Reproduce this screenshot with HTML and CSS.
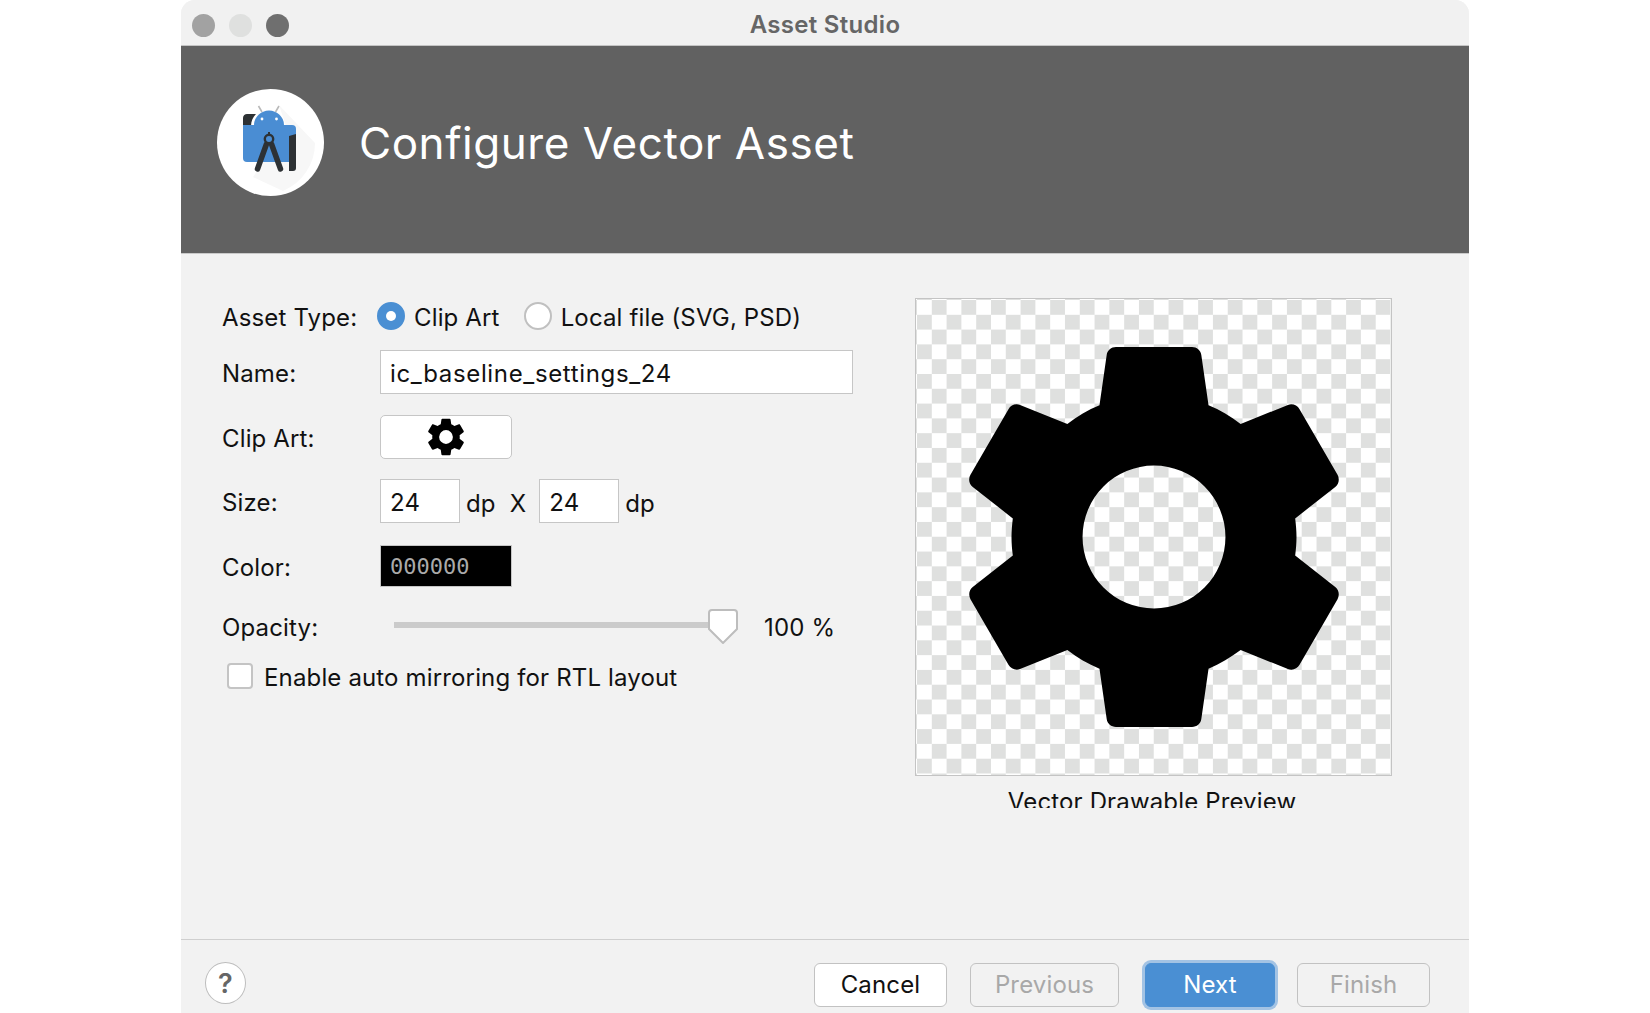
FILE: index.html
```html
<!DOCTYPE html>
<html>
    <head>
        <title>Asset Studio</title>
        <meta name='viewport' content='width=device-width, initial-scale=1.0'>
        <link rel="stylesheet" href="styles.css">
    </head>
    <body>
        <svg class="defs" width="0" height="0">
            <symbol id="gear" viewBox="0 0 24 24">
                <path fill-rule="evenodd" d="M19.43 12.98c.04-.32.07-.64.07-.98s-.03-.66-.07-.98l2.11-1.65c.19-.15.24-.42.12-.64l-2-3.46c-.12-.22-.39-.3-.61-.22l-2.49 1c-.52-.4-1.08-.73-1.69-.98l-.38-2.65C14.46 2.18 14.25 2 14 2h-4c-.25 0-.46.18-.49.42l-.38 2.65c-.61.25-1.17.59-1.69.98l-2.49-1c-.23-.09-.49 0-.61.22l-2 3.46c-.13.22-.07.49.12.64l2.11 1.65c-.04.32-.07.65-.07.98s.03.66.07.98l-2.11 1.65c-.19.15-.24.42-.12.64l2 3.46c.12.22.39.3.61.22l2.49-1c.52.4 1.08.73 1.69.98l.38 2.65c.03.24.24.42.49.42h4c.25 0 .46-.18.49-.42l.38-2.65c.61-.25 1.17-.59 1.69-.98l2.49 1c.23.09.49 0 .61-.22l2-3.46c.12-.22.07-.49-.12-.64l-2.11-1.65zM12 15.76a3.76 3.76 0 1 1 0-7.52 3.76 3.76 0 0 1 0 7.52z"/>
            </symbol>
        </svg>
        <div class="window">
            <div class="titlebar">
                <div class="lights">
                    <span class="light light-close"></span>
                    <span class="light light-min"></span>
                    <span class="light light-max"></span>
                </div>
                <span class="window-title">Asset Studio</span>
            </div>
            <div class="banner">
                <svg class="logo" viewBox="0 0 107 107" width="107" height="107">
                    <circle cx="53.5" cy="53.5" r="53.5" fill="#fff"/>
                    <path d="M62 16 L98 54 A52 52 0 0 1 66 102 L36 88 L70 40z" fill="#f7f7f7"/>
                    <path d="M41.500 17 L45 23 M62 17 L58.500 23" stroke="#b9b9b9" stroke-width="1.6"/>
                    <path d="M37 36 C37 28 44 21.500 52 21.500 C60 21.500 67 28 67 36z" fill="#4a8dd3"/>
                    <circle cx="45" cy="30" r="1.4" fill="#fff"/>
                    <circle cx="59.5" cy="30" r="1.4" fill="#fff"/>
                    <path d="M26 37 V29 C26 26.500 28 25 30 25 H39 C36 28 34 32 34 37z" fill="#2d3134"/>
                    <path d="M26 36 H75 Q79 36 79 40 V70 Q79 73 76 73 H30 Q26 73 26 69z" fill="#4a8dd3"/>
                    <path d="M72 47 L79 45 V79 Q79 82 76 82 H72z" fill="#2d3134"/>
                    <path d="M49.500 55 L40.500 80 M54.500 55 L63.500 80" stroke="#2d3134" stroke-width="5.500" stroke-linecap="round"/>
                    <circle cx="52" cy="50" r="4.200" fill="#4a8dd3" stroke="#2d3134" stroke-width="2.400"/>
                    <rect x="51" y="43" width="2" height="3" fill="#2d3134"/>
                </svg>
                <h1 class="banner-title">Configure Vector Asset</h1>
            </div>
            <div class="content">
                <form class="form">
                    <div class="row row-type">
                        <label class="row-label row-label-type">Asset Type:</label>
                        <span class="radio radio-on"></span>
                        <span class="radio-text">Clip Art</span>
                        <span class="radio"></span>
                        <span class="radio-text">Local file (SVG, PSD)</span>
                    </div>
                    <div class="row row-name">
                        <label class="row-label">Name:</label>
                        <div class="field field-name">ic_baseline_settings_24</div>
                    </div>
                    <div class="row row-clip">
                        <label class="row-label">Clip Art:</label>
                        <div class="clip-button"><svg width="44" height="44"><use href="#gear"/></svg></div>
                    </div>
                    <div class="row row-size">
                        <label class="row-label">Size:</label>
                        <div class="field field-size">24</div>
                        <span class="unit">dp</span>
                        <span class="times">X</span>
                        <div class="field field-size">24</div>
                        <span class="unit">dp</span>
                    </div>
                    <div class="row row-color">
                        <label class="row-label">Color:</label>
                        <div class="color-swatch">000000</div>
                    </div>
                    <div class="row row-opacity">
                        <label class="row-label">Opacity:</label>
                        <div class="slider-track"></div>
                        <svg class="slider-thumb" width="30" height="35" viewBox="0 0 30 35">
                            <path d="M4 1 H26 Q29 1 29 4 V20 L15 34 L1 20 V4 Q1 1 4 1z" fill="#fff" stroke="#bdbdbd" stroke-width="2"/>
                        </svg>
                        <span class="slider-value">100 %</span>
                    </div>
                    <div class="row row-mirror">
                        <span class="checkbox"></span>
                        <span class="mirror-text">Enable auto mirroring for RTL layout</span>
                    </div>
                </form>
                <div class="preview">
                    <div class="preview-box">
                        <svg width="456" height="456"><use href="#gear"/></svg>
                    </div>
                    <div class="preview-caption">Vector Drawable Preview</div>
                </div>
            </div>
            <div class="footer">
                <div class="help">?</div>
                <div class="btn btn-cancel">Cancel</div>
                <div class="btn btn-off btn-prev">Previous</div>
                <div class="btn btn-next">Next</div>
                <div class="btn btn-off btn-finish">Finish</div>
            </div>
        </div>
    </body>
</html>
```

FILE: styles.css
```css
* {
    margin: 0px;
    padding: 0px;
    box-sizing: border-box;
}
html, body {
    height: 1013px;
    overflow: hidden;
    background: #fff;
}
body {
    font-family: "Inter", "Liberation Sans", sans-serif;
    font-size: 24px;
    letter-spacing: 0.15px;
    color: #111;
}
.defs {
    position: absolute;
}
.window {
    width: 1288px;
    height: 1013px;
    margin: 0 auto;
    background: #f2f2f2;
    border-radius: 14px 14px 0 0;
    overflow: hidden;
}

/* title bar */
.titlebar {
    height: 46px;
    display: flex;
    align-items: center;
    padding: 4px 0 0 11px;
    background: #f1f1f1;
    border-bottom: 1px solid #c4c4c4;
    position: relative;
}
.lights {
    display: flex;
    gap: 14px;
    margin-top: 2px;
}
.light {
    width: 23px;
    height: 23px;
    border-radius: 50%;
}
.light-close { background: #a2a2a2; }
.light-min { background: #dfe0df; }
.light-max { background: #6f6f6f; }
.window-title {
    position: absolute;
    left: 0;
    right: 0;
    text-align: center;
    font-size: 24px;
    letter-spacing: 0.3px;
    font-weight: 600;
    color: #666;
}

/* banner */
.banner {
    height: 208px;
    display: flex;
    align-items: flex-start;
    padding: 43px 0 0 36px;
    background: #616161;
    border-bottom: 1px solid #c9c9c9;
}
.logo {
    flex: none;
}
.banner-title {
    margin: 27px 0 0 35px;
    font-size: 44px;
    line-height: 54px;
    font-weight: 400;
    color: #fff;
    letter-spacing: 0.55px;
}

/* form */
.content {
    height: 685px;
    display: flex;
    padding: 44px 0 0 41px;
}
.form {
    width: 693px;
    padding-top: 4px;
    display: flex;
    flex-direction: column;
    gap: 20px;
}
.row {
    display: flex;
    align-items: center;
}
.row-type { height: 28px; }
.row-name { height: 44px; margin-bottom: 1px; }
.row-clip { height: 44px; }
.row-size { height: 44px; margin-bottom: 2px; }
.row-color { height: 42px; margin-bottom: 1px; }
.row-opacity { height: 35px; }
.row-mirror { height: 26px; padding-left: 5px; gap: 11px; }
.row-label {
    width: 158px;
    flex: none;
    padding-top: 4px;
    line-height: 44px;
}
.row-label-type {
    width: 155px;
}
.radio {
    width: 28px;
    height: 28px;
    flex: none;
    border-radius: 50%;
    background: #fff;
    border: 2px solid #c0c0c0;
}
.radio-on {
    background: #4a8fd3;
    border: 9px solid #4a8fd3;
}
.radio-on::after {
    content: "";
    display: block;
    width: 10px;
    height: 10px;
    border-radius: 50%;
    background: #fff;
}
.radio-text {
    margin-left: 9px;
    margin-right: 24px;
    padding-top: 2px;
}
.field {
    height: 44px;
    line-height: 46px;
    padding-left: 9px;
    background: #fff;
    border: 1px solid #c6c6c6;
}
.field-name {
    width: 473px;
    letter-spacing: 0.65px;
}
.field-size {
    width: 80px;
}
.unit {
    margin-left: 6px;
    padding-top: 4px;
}
.times {
    margin: 0 13px 0 14px;
    padding-top: 4px;
}
.clip-button {
    width: 132px;
    height: 44px;
    display: flex;
    align-items: center;
    justify-content: center;
    background: #fff;
    border: 1px solid #c6c6c6;
    border-radius: 5px;
}
.color-swatch {
    width: 132px;
    height: 42px;
    line-height: 42px;
    padding-left: 9px;
    background: #000;
    border: 1px solid #c6c6c6;
    color: #aaa;
    font-family: "DejaVu Sans Mono", monospace;
    font-size: 22px;
    letter-spacing: 0;
}
.slider-track {
    width: 315px;
    height: 6px;
    margin: -1px 0 0 14px;
    background: #cbcbcb;
}
.slider-thumb {
    flex: none;
    margin: 2px 0 0 -1px;
}
.slider-value {
    margin-left: 26px;
    padding-top: 4px;
}
.checkbox {
    width: 26px;
    height: 26px;
    background: #fff;
    border: 2px solid #c4c4c4;
    border-radius: 4px;
}
.mirror-text {
    padding-top: 2px;
}

/* preview */
.preview {
    width: 477px;
}
.preview-box {
    width: 477px;
    height: 478px;
    display: flex;
    align-items: center;
    justify-content: center;
    background: repeating-conic-gradient(#dfe0df 0 25%, #fff 0 50%) 1px 1px / 29.6px 29.6px;
    border: 1px solid #c4c4c4;
}
.preview-caption {
    height: 32px;
    padding: 9px 3px 0 0;
    overflow: hidden;
    text-align: center;
    line-height: 34px;
}

/* footer */
.footer {
    display: flex;
    align-items: flex-start;
    padding: 23px 39px 0 24px;
    border-top: 1px solid #cfcfcf;
}
.help {
    width: 41px;
    height: 42px;
    margin-top: -1px;
    border-radius: 50%;
    background: #fff;
    border: 1px solid #bdbdbd;
    text-align: center;
    line-height: 41px;
    font-size: 27px;
    font-weight: 600;
    color: #666;
}
.btn {
    height: 44px;
    line-height: 42px;
    text-align: center;
    background: #fff;
    border: 1px solid #c2c2c2;
    border-radius: 6px;
}
.btn-cancel {
    width: 133px;
    margin-left: auto;
}
.btn-off {
    background: #f2f2f2;
    color: #a8a8a8;
}
.btn-prev {
    width: 149px;
    margin-left: 23px;
}
.btn-next {
    width: 130px;
    margin-left: 26px;
    background: #4a8fd3;
    border-color: #4a8fd3;
    color: #fff;
    box-shadow: 0 0 0 3px #a3c3e4;
}
.btn-finish {
    width: 133px;
    margin-left: 22px;
}
```
